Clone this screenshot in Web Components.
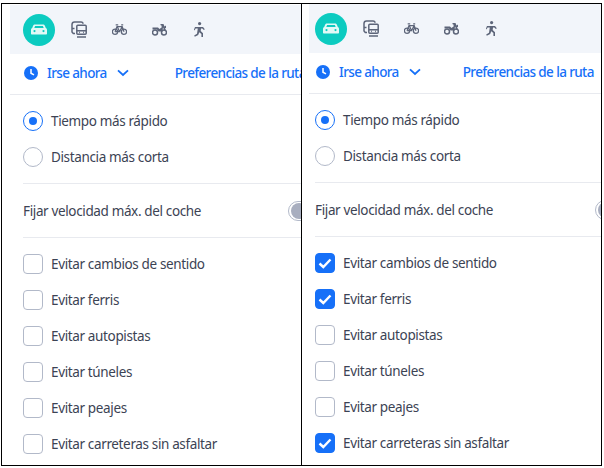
<!DOCTYPE html>
<html lang="es"><head><meta charset="utf-8"><title>Rutas</title>
<style>
html,body{margin:0;padding:0;background:#fff}
body{font-family:"Noto Sans","Open Sans",sans-serif;width:604px;height:468px;overflow:hidden}
.wrap{display:flex;padding:3px 0 0 1px;height:463px;box-sizing:content-box}
route-panel hr{border:0;height:1px;background:#e8eaef;margin:0}
route-panel hr.in{margin-left:var(--pad)}
route-panel .g{height:8px}
</style></head><body>
<template id="t-panel"><style>
:host{display:block;box-sizing:border-box;height:463px;border:1px solid #000;overflow:hidden;background:#fff}
.in{width:var(--inner);margin-left:var(--left)}
</style><div class="in"><slot></slot></div></template>

<template id="t-modes"><style>
:host{display:flex;align-items:center;height:49px;background:#f2f5fa;padding-left:var(--pad);box-sizing:border-box}
span{display:flex;width:40px;height:32px;align-items:center;justify-content:center;flex:none}
.on{width:32px;height:32px;background:#0ccbc0;border-radius:50%;margin-right:4px}
svg{display:block}
</style>
<span class="on"><svg width="16" height="12" viewBox="0 0 16 12"><path fill="#e2f9f6" d="M4 .5h8c.9 0 1.500.5 1.900 1.300L14.800 4c.7.4 1.200 1.100 1.200 2v3.500c0 .6-.4 1-1 1H1c-.6 0-1-.4-1-1V6c0-.9.5-1.600 1.200-2l.9-2.200C2.500 1 3.100.5 4 .5zM3.300 4h9.400l-.6-1.500c-.1-.3-.3-.4-.6-.4H4.500c-.3 0-.5.1-.6.4zM3.500 6a1.100 1.100 0 100 2.200 1.100 1.100 0 000-2.200zm9 0a1.100 1.100 0 100 2.200 1.100 1.100 0 000-2.200z"/></svg></span>
<span><svg width="16" height="17" viewBox="0 0 16 17" fill="none" stroke="#5d6579" stroke-width="1.500"><path d="M4 12.500H2.300L1 11V3.500C1 2 2.100.9 3.500.9H10c1.200 0 2 .8 2 1.800"/><path d="M1 7.500h2.500"/><rect x="5.800" y="4.300" width="9.400" height="9" rx="1"/><path d="M5.800 9.800h9.400M8 11.600h.8M12.200 11.600h.8M6 16h9"/></svg></span>
<span><svg width="15" height="11" viewBox="0 0 15 11" fill="none" stroke="#5d6579" stroke-width="1.250"><circle cx="3" cy="7.700" r="2.600"/><circle cx="12" cy="7.700" r="2.600"/><path d="M3 7.700 5 2.500h5.200L12 7.700M5.200 2.500 7.500 7.700H3M10.200 2.500 7.500 7.700M3.700.8h2.500M9.200.8h2"/></svg></span>
<span><svg width="15" height="12" viewBox="0 0 15 12"><circle cx="3" cy="8.500" r="2.500" fill="none" stroke="#5d6579" stroke-width="1.500"/><circle cx="12" cy="8.500" r="2.500" fill="none" stroke="#5d6579" stroke-width="1.500"/><path fill="#5d6579" d="M8.500 0h3l1 2.500 1.500-1v2.500l-1 .3.900 2-1.300.6-1.600-3.300-.6 3.900H6.500L5 5.500H.5V3.500h5.500L7.500 5 9.800 3.200 9.300 1.300H8.500z"/></svg></span>
<span><svg width="11" height="15" viewBox="0 0 11 15" fill="#5d6579"><circle cx="5.600" cy="1.600" r="1.600"/><path d="M1 5h8l1.800 2.200-.9.800-1.600-1.500H7l-.3 2.500 2.300 2.200V15H7.400v-3L5.300 10.300 4.200 13 .8 14.700.2 13.400l2.800-1.600L3.800 6.500H1.600L.6 8.500-.1 7.700z"/></svg></span>
</template>

<template id="t-route"><style>
:host{display:flex;align-items:center;height:40px;box-sizing:border-box;padding:0 0 2px calc(var(--pad) + 1px);color:#1670f8;font-size:13.500px;font-weight:500;letter-spacing:-.62px;white-space:nowrap}
svg{display:block;flex:none}
.t{margin:0 10px 0 9px}
.p{margin-left:var(--pref)}
</style>
<svg width="14" height="14" viewBox="0 0 14 14"><circle cx="7" cy="7" r="7" fill="#1670f8"/><path d="M7 3v4.200l3 1.600" fill="none" stroke="#fff" stroke-width="1.500"/></svg>
<span class="t">Irse ahora</span>
<svg width="12" height="8" viewBox="0 0 12 8"><path d="M1 1.300 6 6l5-4.700" fill="none" stroke="#1670f8" stroke-width="1.800"/></svg>
<span class="p"><slot></slot></span></template>

<template id="t-opt"><style>
:host{display:flex;align-items:center;height:36px;padding-left:var(--pad);color:#3c4354;font-size:13.500px;letter-spacing:-.36px;white-space:nowrap}
.b{width:20px;height:20px;box-sizing:border-box;border:1px solid #b2b9c9;margin-right:8px;flex:none;display:flex;align-items:center;justify-content:center;background:#fff}
:host([type=radio]) .b{border-radius:50%}
:host([type=check]) .b{border-radius:4px}
:host([type=radio][on]) .b{border-color:#1670f8;border-width:1.500px}
:host([type=radio][on]) .b::after{content:"";width:8px;height:8px;border-radius:50%;background:#1670f8}
:host([type=check][on]) .b{background:#1670f8;border-color:#1670f8}
svg{display:none}
:host([type=check][on]) svg{display:block}
</style><span class="b"><svg width="14" height="11" viewBox="0 0 14 11"><path d="M1.500 5.500 5.300 9l7.200-7.500" fill="none" stroke="#fff" stroke-width="2.400"/></svg></span><slot></slot></template>

<template id="t-speed"><style>
:host{display:flex;align-items:center;justify-content:space-between;height:53px;padding-left:var(--pad);color:#3c4354;font-size:13.500px;letter-spacing:-.36px;white-space:nowrap}
.t{width:36px;height:20px;box-sizing:border-box;border:1px solid #b2b9c9;border-radius:10px;padding:1px 2px;background:#fff;flex:none}
.k{display:block;width:16px;height:16px;border-radius:50%;background:#a8aebf}
</style><span><slot></slot></span><span class="t"><span class="k"></span></span></template>

<script>
for (const [n,t] of [['route-panel','t-panel'],['mode-bar','t-modes'],['route-prefs','t-route'],['route-option','t-opt'],['speed-row','t-speed']]) {
  customElements.define(n, class extends HTMLElement {
    constructor(){super();this.attachShadow({mode:'open'}).appendChild(document.getElementById(t).content.cloneNode(true));}
  });
}
</script>
<div class="wrap">
<route-panel style="width:301px;--left:8px;--inner:314px;--pad:13px;padding-top:1px;--pref:46px">
<mode-bar></mode-bar>
<route-prefs>Preferencias de la ruta</route-prefs>
<hr><div class="g"></div>
<route-option type="radio" on>Tiempo más rápido</route-option>
<route-option type="radio">Distancia más corta</route-option>
<div class="g"></div><hr class="in">
<speed-row>Fijar velocidad máx. del coche</speed-row>
<hr class="in"><div class="g"></div>
<route-option type="check">Evitar cambios de sentido</route-option>
<route-option type="check">Evitar ferris</route-option>
<route-option type="check">Evitar autopistas</route-option>
<route-option type="check">Evitar túneles</route-option>
<route-option type="check">Evitar peajes</route-option>
<route-option type="check">Evitar carreteras sin asfaltar</route-option>
</route-panel>
<route-panel style="width:301px;margin-left:-1px;--left:7px;--inner:322px;--pad:6px;--pref:42px">
<mode-bar></mode-bar>
<route-prefs>Preferencias de la ruta</route-prefs>
<hr><div class="g"></div>
<route-option type="radio" on>Tiempo más rápido</route-option>
<route-option type="radio">Distancia más corta</route-option>
<div class="g"></div><hr class="in">
<speed-row>Fijar velocidad máx. del coche</speed-row>
<hr class="in"><div class="g"></div>
<route-option type="check" on>Evitar cambios de sentido</route-option>
<route-option type="check" on>Evitar ferris</route-option>
<route-option type="check">Evitar autopistas</route-option>
<route-option type="check">Evitar túneles</route-option>
<route-option type="check">Evitar peajes</route-option>
<route-option type="check" on>Evitar carreteras sin asfaltar</route-option>
</route-panel>
</div>
</body></html>
